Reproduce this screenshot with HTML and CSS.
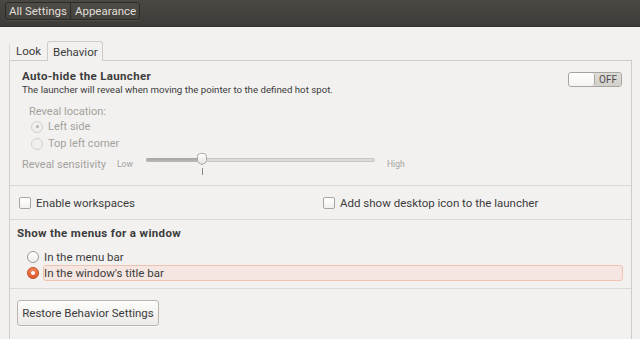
FILE: index.html
```html
<!DOCTYPE html>
<html>
<head>
<meta charset="utf-8">
<link rel="stylesheet" href="styles.css">
</head>
<body>
<header class="topbar">
  <nav class="crumbs">
    <span class="crumb">All Settings</span>
    <span class="crumb">Appearance</span>
  </nav>
</header>

<div class="tabs">
  <div class="tab">Look</div>
  <div class="tab active">Behavior</div>
</div>

<main class="panel">
  <section class="sec launcher">
    <div class="head">
      <div class="head-text">
        <div class="title">Auto-hide the Launcher</div>
        <div class="desc">The launcher will reveal when moving the pointer to the defined hot spot.</div>
      </div>
      <div class="switch"><span class="knob"></span><span class="off">OFF</span></div>
    </div>
    <div class="reveal">
      <div class="reveal-label">Reveal location:</div>
      <div class="radio-row dim"><span class="radio dim-on"></span><span>Left side</span></div>
      <div class="radio-row dim"><span class="radio dim-off"></span><span>Top left corner</span></div>
    </div>
    <div class="sens">
      <span class="sens-label">Reveal sensitivity</span>
      <span class="tiny low">Low</span>
      <div class="slider">
        <div class="track"></div>
        <div class="fill"></div>
        <svg class="handle" width="12" height="13" viewBox="0 0 12 13">
          <defs>
            <linearGradient id="hg" x1="0" y1="0" x2="0" y2="1">
              <stop offset="0" stop-color="#ffffff"/>
              <stop offset="1" stop-color="#e4e2de"/>
            </linearGradient>
          </defs>
          <path d="M1.5 3.5 Q1.5 0.5 4.5 0.5 H7.5 Q10.5 0.5 10.5 3.5 V7.5 Q10.5 9 9 10 L6 11.5 L3 10 Q1.5 9 1.5 7.5 Z" fill="url(#hg)" stroke="#a9a6a1"/>
        </svg>
        <div class="tick"></div>
      </div>
      <span class="tiny high">High</span>
    </div>
  </section>

  <section class="sec checks">
    <div class="check-row"><span class="check"></span><span>Enable workspaces</span></div>
    <div class="check-row"><span class="check"></span><span>Add show desktop icon to the launcher</span></div>
  </section>

  <section class="sec menus">
    <div class="title">Show the menus for a window</div>
    <div class="menu-opt"><span class="radio"></span><span class="opt-text">In the menu bar</span></div>
    <div class="menu-opt"><span class="radio on"></span><span class="opt-text selected">In the window's title bar</span></div>
  </section>

  <section class="sec actions">
    <button class="btn">Restore Behavior Settings</button>
  </section>
</main>
</body>
</html>
```

FILE: styles.css
```css
* { box-sizing: border-box; }

html, body {
  margin: 0;
  padding: 0;
}

body {
  width: 640px;
  height: 339px;
  overflow: hidden;
  background: #f2f1f0;
  font-family: Roboto, "Noto Sans", sans-serif;
  color: #3c3c3c;
  font-size: 11px;
}

.topbar {
  height: 27px;
  background: linear-gradient(#4a4944, #3d3c38);
  border-bottom: 1px solid #33322e;
  padding: 2px 0 0 5px;
}

.crumbs {
  display: inline-flex;
  height: 18px;
  border: 1px solid #2c2b28;
  border-radius: 3px;
  background: linear-gradient(#4d4c47, #43423e);
  box-shadow: 0 1px 0 rgba(255,255,255,0.08);
}

.crumb {
  color: #e2ded6;
  font-size: 11.5px;
  line-height: 16px;
  padding: 0 3px 0 3px;
}

.crumb + .crumb {
  border-left: 1px solid #2c2b28;
  padding-left: 4px;
}

.tabs {
  display: flex;
  align-items: flex-end;
  height: 20px;
  margin-top: 13px;
  padding-left: 9px;
}

.tab {
  font-size: 11.5px;
  height: 16px;
  line-height: 15px;
  padding: 0 6px 0 6px;
  width: 38px;
  border-left: 1px solid #dcd9d5;
}

.tab.active {
  position: relative;
  z-index: 1;
  width: 56px;
  height: 20px;
  line-height: 20px;
  margin-bottom: -1px;
  padding: 0 5px;
  background: #f2f1f0;
  border: 1px solid #cfccc7;
  border-bottom: none;
  border-radius: 3px 3px 0 0;
}

.panel {
  margin-left: 9px;
  width: 623px;
  height: 279px;
  border: 1px solid #cfccc7;
  border-bottom: none;
}

.sec {
  border-bottom: 1px solid #dcd9d5;
}

.launcher {
  height: 125px;
  padding: 8px 9px 0 12px;
}

.head {
  display: flex;
  justify-content: space-between;
  align-items: flex-start;
}

.title {
  font-weight: bold;
  font-size: 11.5px;
  letter-spacing: 0.35px;
  line-height: 14px;
}

.desc {
  font-size: 9.7px;
  line-height: 14px;
}

.switch {
  display: flex;
  margin-top: 3px;
  width: 54px;
  height: 15px;
  border: 1px solid #a8a5a0;
  border-radius: 3px;
  overflow: hidden;
}

.knob {
  width: 26px;
  background: linear-gradient(#ffffff, #f4f3f1);
  border-right: 1px solid #a8a5a0;
  border-radius: 3px;
}

.off {
  flex: 1;
  background: linear-gradient(#dedcd8, #d2d0cb);
  font-size: 10px;
  line-height: 13px;
  text-align: center;
  color: #4c4c4c;
}

.reveal {
  margin: 8px 0 0 7px;
  color: #a4a19c;
}

.reveal-label {
  font-size: 11px;
  line-height: 13px;
}

.radio-row {
  display: flex;
  align-items: center;
  height: 17px;
  font-size: 11px;
  padding-left: 2px;
  gap: 5px;
}

.radio {
  width: 12px;
  height: 12px;
  border-radius: 50%;
  border: 1px solid #9d9a95;
  background: linear-gradient(#ffffff, #efeeec);
  flex: none;
  position: relative;
}

.radio.dim-off, .radio.dim-on {
  border-color: #d3d0cb;
  background: #f0efed;
}

.radio.dim-on::after {
  content: "";
  position: absolute;
  left: 3.5px;
  top: 3.5px;
  width: 3px;
  height: 3px;
  border-radius: 50%;
  background: #b6b3ae;
}

.radio.on {
  border-color: #c1491f;
  background: linear-gradient(#f0875c, #df5a2a);
}

.radio.on::after {
  content: "";
  position: absolute;
  left: 3px;
  top: 3px;
  width: 4px;
  height: 4px;
  border-radius: 50%;
  background: #ffffff;
}

.sens {
  display: flex;
  align-items: center;
  height: 24px;
  color: #a4a19c;
}

.sens-label {
  width: 95px;
  font-size: 11px;
}

.tiny {
  font-size: 8.5px;
}

.low {
  width: 29px;
}

.slider {
  position: relative;
  width: 229px;
  height: 24px;
  margin-right: 12px;
}

.track {
  position: absolute;
  left: 0;
  right: 0;
  top: 6px;
  height: 4px;
  border-radius: 2px;
  background: #dcdad6;
  border: 1px solid #cbc8c3;
}

.fill {
  position: absolute;
  left: 0;
  top: 6px;
  width: 56px;
  height: 4px;
  border-radius: 2px;
  background: linear-gradient(#a7a5a1, #bcbab6);
}

.handle {
  position: absolute;
  left: 50px;
  top: 1px;
}

.tick {
  position: absolute;
  left: 56px;
  top: 16px;
  width: 1px;
  height: 7px;
  background: #8d8a85;
}

.checks {
  height: 34px;
  display: grid;
  grid-template-columns: 304px 1fr;
  align-items: center;
  padding: 0 0 0 9px;
}

.check-row {
  display: flex;
  align-items: center;
  gap: 5px;
  font-size: 11.5px;
}

.check {
  width: 12px;
  height: 12px;
  border: 1px solid #a9a6a1;
  border-radius: 2px;
  background: linear-gradient(#ffffff, #f1f0ee);
}

.menus {
  height: 69px;
  padding: 6px 8px 0 7px;
}

.menus .title {
  margin-bottom: 9px;
}

.menu-opt {
  display: flex;
  align-items: center;
  height: 16px;
  padding-left: 10px;
  gap: 4px;
  font-size: 11.5px;
}

.opt-text {
  flex: 1;
  height: 16px;
  line-height: 15px;
  padding-left: 0;
  border: 1px solid transparent;
}

.opt-text.selected {
  background: #f5e6e1;
  border-color: #efc2b2;
  border-radius: 3px;
}

.actions {
  border-bottom: none;
  padding: 11px 0 0 7px;
}

.btn {
  font-family: Roboto, "Noto Sans", sans-serif;
  font-size: 11.5px;
  color: #3c3c3c;
  width: 142px;
  height: 26px;
  padding: 0;
  border: 1px solid #b9b6b1;
  border-radius: 3px;
  background: linear-gradient(#fdfdfc, #ebeae7);
  box-shadow: 0 1px 0 rgba(255,255,255,0.6);
}
```
